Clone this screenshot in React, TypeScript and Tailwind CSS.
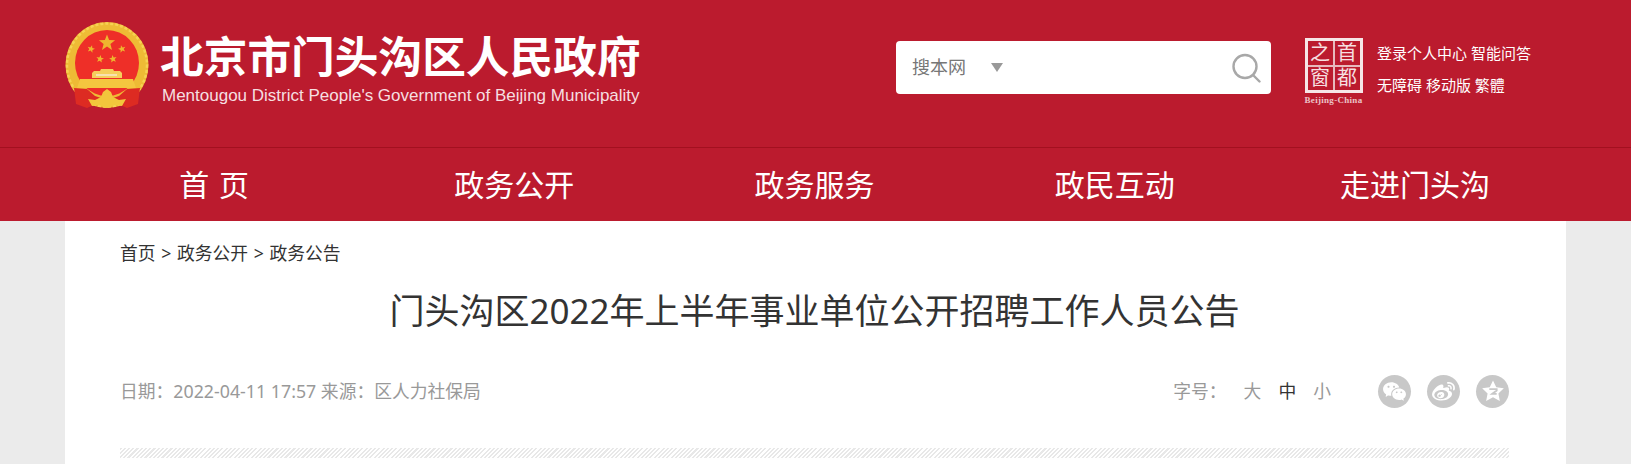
import { RiWechatFill, RiWeiboFill } from 'react-icons/ri';

const NAV = ['首 页', '政务公开', '政务服务', '政民互动', '走进门头沟'];

function Star({ cx, cy, r, rot = 0 }: { cx: number; cy: number; r: number; rot?: number }) {
  const pts = Array.from({ length: 10 }, (_, i) => {
    const a = ((i * 36 - 90 + rot) * Math.PI) / 180;
    const rr = i % 2 === 0 ? r : r * 0.42;
    return `${(cx + rr * Math.cos(a)).toFixed(2)},${(cy + rr * Math.sin(a)).toFixed(2)}`;
  }).join(' ');
  return <polygon points={pts} fill="#eeb62f" />;
}

function Emblem() {
  return (
    <svg viewBox="0 0 86 90" className="w-[86px] h-[90px] shrink-0">
      <ellipse cx="42" cy="43" rx="41.5" ry="43" fill="#eebb35" />
      <ellipse cx="42" cy="43" rx="40" ry="41.5" fill="none" stroke="#f6d253" strokeWidth="2.5" strokeDasharray="3 2" />
      <ellipse cx="42" cy="41" rx="32" ry="33" fill="#ee2f28" />
      <Star cx={42} cy={21} r={8.5} />
      <Star cx={26} cy={27} r={4} rot={15} />
      <Star cx={57} cy={27} r={4} rot={-15} />
      <Star cx={35} cy={37} r={4} rot={10} />
      <Star cx={48} cy={37} r={4} rot={-10} />
      <path d="M27 56v-5l2-2h6l1-2h12l1 2h6l2 2v5z" fill="#f5cf5c" />
      <rect x="31" y="52" width="21" height="2" fill="#f8e2b0" />
      <path d="M15 57h53l3 9H12z" fill="#f4c63f" />
      <path d="M9 66l13 1 8 7 12 4 12-4 8-7 13-1-2 16-11 4-11-5-9 2-9-2-11 5-11-4z" fill="#dd2b22" />
      <path d="M23 77l7 1 6-3 2-5 4-3 4 3 2 5 6 3 7-1-4 7-7-1-8 3-8-3-7 1z" fill="#f2c63c" />
    </svg>
  );
}

function CapitalLogo() {
  return (
    <div className="flex flex-col items-center w-[63px] shrink-0">
      <div className="w-[58px] h-[55px] border-[3px] border-[#f6e6e7] bg-[#e7b9bd] grid grid-cols-2 grid-rows-2 gap-[2px] text-[#f6dfe0] text-[20px] leading-none text-center">
        <div className="bg-[#bb1b2e] flex items-center justify-center">之</div>
        <div className="bg-[#bb1b2e] flex items-center justify-center">首</div>
        <div className="bg-[#bb1b2e] flex items-center justify-center">窗</div>
        <div className="bg-[#bb1b2e] flex items-center justify-center">都</div>
      </div>
      <span className="mt-[2px] text-[9px] leading-[10px] font-bold tracking-[0.3px] text-[#ecc3c7] whitespace-nowrap font-['Liberation_Serif',serif]">
        Beijing-China
      </span>
    </div>
  );
}

function QzoneIcon() {
  return (
    <svg viewBox="0 0 24 24" className="w-[26px] h-[26px]">
      <path d="M12 2.2l3 6.3 7 .9-5 4.8 1.3 7-6.3-3.4-6.3 3.4 1.3-7-5-4.8 7-.9z" fill="#fff" />
      <path d="M8.6 10.2h6.8v1.3l-4.2 3.2h4.2" fill="none" stroke="#c8c8c8" strokeWidth="1.7" />
    </svg>
  );
}

export default function App() {
  return (
    <div className="h-[464px] overflow-hidden bg-[#ebebeb] font-['Noto_Sans','Noto_Sans_CJK_SC',sans-serif]">
      {/* Header */}
      <header className="h-[148px] bg-[#bb1b2e] border-b border-[#a3101f] pl-[65px] flex">
        <div className="w-[831px] flex items-start pt-[22px] gap-[9px]">
          <Emblem />
          <div className="pt-[6px]">
            <h1 className="text-[43.7px] leading-[52px] font-bold text-white whitespace-nowrap font-['Noto_Sans_CJK_SC',sans-serif]">
              北京市门头沟区人民政府
            </h1>
            <p className="mt-[6px] ml-[2px] text-[17px] leading-[20px] text-[#f6dfe0] whitespace-nowrap font-['Liberation_Sans',sans-serif]">
              Mentougou District People's Government of Beijing Municipality
            </p>
          </div>
        </div>

        <div className="w-[375px] h-[53px] mt-[41px] bg-white rounded-[4px] flex items-center pl-[16px] pr-[10px]">
          <span className="text-[18px] text-[#777]">搜本网</span>
          <span className="ml-[25px] w-0 h-0 border-x-[6px] border-x-transparent border-t-[9px] border-t-[#999]" />
          <svg viewBox="0 0 30 30" className="ml-auto w-[30px] h-[30px]" fill="none" stroke="#a8a8a8" strokeWidth="2.4">
            <circle cx="14" cy="13.5" r="11.5" />
            <path d="M22 22l6.5 6.5" strokeLinecap="round" />
          </svg>
        </div>

        <div className="ml-[31px] mt-[38px] flex items-start">
          <CapitalLogo />
          <div className="ml-[12px] text-[15px] leading-[32px] text-white whitespace-nowrap">
            <div className="mt-[-1px]">登录个人中心 智能问答</div>
            <div>无障碍 移动版 繁體</div>
          </div>
        </div>
      </header>

      {/* Nav */}
      <nav className="h-[73px] bg-[#bb1b2e] pl-[64px] pr-[66px] grid grid-cols-5">
        {NAV.map((item) => (
          <a key={item} className="flex items-center justify-center text-[30px] text-white whitespace-pre [word-spacing:2px]">
            {item}
          </a>
        ))}
      </nav>

      {/* Article head */}
      <main className="mx-[65px] w-[1501px] h-[300px] bg-white pl-[55px] pr-[57px]">
        <div className="pt-[19px] text-[17.8px] leading-[26px] text-[#333] [word-spacing:1px]">首页 &gt; 政务公开 &gt; 政务公告</div>
        <h2 className="mt-[18px] text-center text-[35px] leading-[54px] text-[#333] whitespace-nowrap">
          门头沟区2022年上半年事业单位公开招聘工作人员公告
        </h2>
        <div className="mt-[36px] h-[34px] flex items-center text-[17.8px] text-[#999]">
          <span>日期：2022-04-11 17:57 来源：区人力社保局</span>
          <span className="ml-auto">字号：</span>
          <span className="ml-[17px]">大</span>
          <span className="ml-[17px] text-[#333]">中</span>
          <span className="ml-[17px]">小</span>
          <div className="ml-[47px] flex gap-[16px]">
            <span className="w-[33px] h-[33px] rounded-full bg-[#c8c8c8] flex items-center justify-center text-white">
              <RiWechatFill size={25} />
            </span>
            <span className="w-[33px] h-[33px] rounded-full bg-[#c8c8c8] flex items-center justify-center text-white">
              <RiWeiboFill size={25} />
            </span>
            <span className="w-[33px] h-[33px] rounded-full bg-[#c8c8c8] flex items-center justify-center">
              <QzoneIcon />
            </span>
          </div>
        </div>
        <div className="mt-[40px] h-[10px] bg-[repeating-linear-gradient(135deg,#e8e8e8_0px,#e8e8e8_1.5px,#ffffff_1.5px,#ffffff_3px)]" />
      </main>
    </div>
  );
}
